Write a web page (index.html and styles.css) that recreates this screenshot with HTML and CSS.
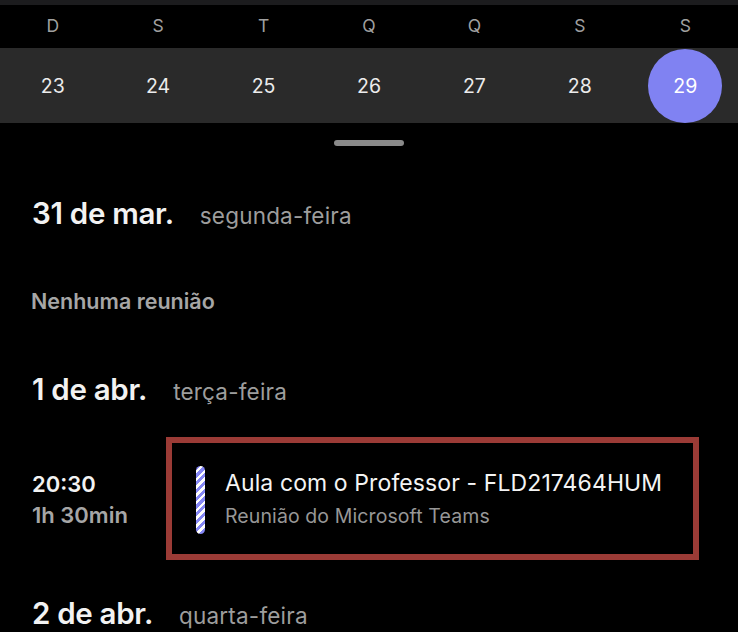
FILE: index.html
```html
<!DOCTYPE html>
<html lang="pt">
<head>
<meta charset="utf-8">
<link rel="stylesheet" href="styles.css">
</head>
<body>
<div class="topstrip"></div>
<div class="weekdays">
  <span>D</span><span>S</span><span>T</span><span>Q</span><span>Q</span><span>S</span><span>S</span>
</div>
<div class="dates">
  <span class="d">23</span><span class="d">24</span><span class="d">25</span><span class="d">26</span><span class="d">27</span><span class="d">28</span><span class="d sel">29</span>
</div>
<div class="handle-wrap"><div class="handle"></div></div>

<div class="day-head first"><span class="dnum">31 de mar.</span><span class="dname">segunda-feira</span></div>
<div class="none">Nenhuma reunião</div>

<div class="day-head second"><span class="dnum">1 de abr.</span><span class="dname">terça-feira</span></div>
<div class="event-row">
  <div class="time">
    <div class="t1">20:30</div>
    <div class="t2">1h 30min</div>
  </div>
  <div class="card">
    <div class="bar"></div>
    <div class="info">
      <div class="title">Aula com o Professor - FLD217464HUM</div>
      <div class="sub">Reunião do Microsoft Teams</div>
    </div>
  </div>
</div>

<div class="day-head last"><span class="dnum">2 de abr.</span><span class="dname">quarta-feira</span></div>
</body>
</html>
```

FILE: styles.css
```css
html, body {
  margin: 0;
  padding: 0;
  background: #000;
  color: #fff;
  font-family: Inter, "Noto Sans", sans-serif;
  overflow: hidden;
}
.topstrip {
  height: 5px;
  background: #1c1c1e;
}
.weekdays, .dates {
  display: grid;
  grid-template-columns: repeat(7, 1fr);
  text-align: center;
}
.weekdays {
  height: 43px;
  align-items: center;
  color: #a0a0a0;
  font-size: 17.5px;
}
.weekdays span { padding-bottom: 2px; }
.dates {
  height: 75px;
  background: #2a2a2a;
  align-items: center;
  justify-items: center;
  font-size: 19.5px;
  color: #ececec;
}
.d {
  width: 74px;
  height: 74px;
  border-radius: 50%;
  display: flex;
  align-items: center;
  justify-content: center;
  padding-top: 1px;
  box-sizing: border-box;
}
.sel {
  background: #8082f2;
  color: #fff;
}
.handle-wrap {
  display: flex;
  justify-content: center;
  padding-top: 17px;
}
.handle {
  width: 70px;
  height: 6px;
  border-radius: 3px;
  background: #8a8a8a;
}
.day-head {
  display: flex;
  align-items: baseline;
  padding-left: 32px;
  line-height: 36px;
}
.day-head.first { margin-top: 49px; }
.day-head.second { margin-top: 57px; }
.day-head.last { margin-top: 35px; }
.dnum {
  font-size: 29.5px;
  font-weight: 600;
  color: #f2f2f2;
  letter-spacing: -0.3px;
}
.dname {
  font-size: 22.5px;
  color: #9d9d9d;
  margin-left: 26px;
  letter-spacing: 0.2px;
}
.none {
  margin-top: 54px;
  padding-left: 31px;
  line-height: 26px;
  font-size: 21.5px;
  font-weight: 600;
  color: #a6a6a6;
}
.event-row {
  display: flex;
  align-items: center;
  margin-top: 27px;
}
.time {
  width: 166px;
  padding-left: 32px;
  box-sizing: border-box;
  font-weight: 600;
  font-size: 22px;
  line-height: 28px;
  padding-top: 1px;
}
.t1 { color: #f2f2f2; }
.t2 { color: #a6a6a6; margin-top: 3px; }
.card {
  width: 533px;
  height: 123px;
  box-sizing: border-box;
  border: 6px solid #9b3b36;
  display: flex;
  align-items: center;
  padding-left: 24px;
}
.bar {
  width: 9px;
  height: 68px;
  border-radius: 4.5px;
  margin-top: 3px;
  background: repeating-linear-gradient(135deg, #8587f5 0 3px, #ffffff 3px 5.5px);
}
.info { margin-left: 20px; }
.title {
  font-size: 23px;
  line-height: 28px;
  color: #f4f4f4;
  letter-spacing: 0.1px;
}
.sub {
  font-size: 19.5px;
  line-height: 24px;
  color: #979797;
  margin-top: 7px;
  letter-spacing: 0.1px;
}
```
